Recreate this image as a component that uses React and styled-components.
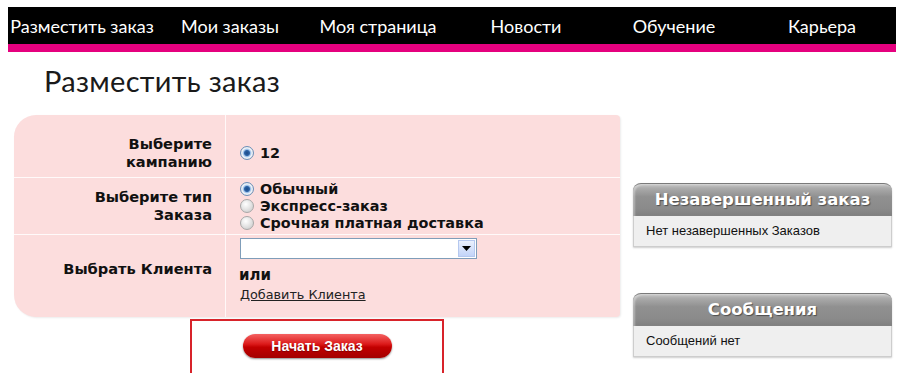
import React from 'react'
import styled, { createGlobalStyle } from 'styled-components'

const navItems = ['Разместить заказ', 'Мои заказы', 'Моя страница', 'Новости', 'Обучение', 'Карьера']

const deliveryTypes = [
  { id: 'normal', title: 'Обычный', checked: true },
  { id: 'express', title: 'Экспресс-заказ' },
  { id: 'paid', title: 'Срочная платная доставка' },
]

const GlobalStyle = createGlobalStyle`
  body {
    margin: 0;
    background: #fff;
    font-family: "DejaVu Sans", sans-serif;
  }
`

function App() {
  return (
    <Page>
      <GlobalStyle />
      <NavBar>
        {navItems.map((item) => (
          <NavItem key={item}>{item}</NavItem>
        ))}
      </NavBar>

      <Title>Разместить заказ</Title>

      <Main>
        <Column>
          <FormPanel>
            <FormRow $height={62}>
              <Label $pad="14px 13px 0 0">Выберите<br />кампанию</Label>
              <Value $pad="14px 0 0 14px">
                <Option>
                  <Radio $checked />
                  12
                </Option>
              </Value>
            </FormRow>

            <FormRow $height={56}>
              <Label>Выберите тип<br />Заказа</Label>
              <Value>
                {deliveryTypes.map((t) => (
                  <Option key={t.id}>
                    <Radio $checked={t.checked} />
                    {t.title}
                  </Option>
                ))}
              </Value>
            </FormRow>

            <FormRow $height={82}>
              <Label $pad="0 13px 14px 0">Выбрать Клиента</Label>
              <Value $top>
                <Select>
                  <SelectArrow>
                    <svg width="9" height="5" viewBox="0 0 9 5">
                      <path d="M0 0h9L4.5 5z" fill="#000" />
                    </svg>
                  </SelectArrow>
                </Select>
                <Or>или</Or>
                <AddLink href="#">Добавить Клиента</AddLink>
              </Value>
            </FormRow>
          </FormPanel>

          <ButtonFrame>
            <StartButton>Начать Заказ</StartButton>
          </ButtonFrame>
        </Column>

        <Sidebar>
          <SideBox>
            <SideHeader>Незавершенный заказ</SideHeader>
            <SideBody>Нет незавершенных Заказов</SideBody>
          </SideBox>
          <SideBox>
            <SideHeader>Сообщения</SideHeader>
            <SideBody>Сообщений нет</SideBody>
          </SideBox>
        </Sidebar>
      </Main>
    </Page>
  )
}

const Page = styled.div`
  padding: 7px 5px 0 8px;
  height: 366px;
  overflow: hidden;
`

const NavBar = styled.nav`
  display: grid;
  grid-template-columns: repeat(6, 1fr);
  align-items: center;
  width: 888px;
  height: 37px;
  background: #000;
  border-bottom: 8px solid #e5007e;
`

const NavItem = styled.div`
  text-align: center;
  color: #fff;
  font-family: Lato, sans-serif;
  font-size: 18px;
  white-space: nowrap;
`

const Title = styled.h1`
  margin: 13px 0 0 36px;
  font-family: Lato, sans-serif;
  font-weight: 400;
  font-size: 29px;
  letter-spacing: 0.3px;
  line-height: 32px;
  color: #1a1a1a;
`

const Main = styled.div`
  display: flex;
  align-items: flex-start;
  margin-top: 18px;
  padding-left: 6px;
`

const Column = styled.div`
  width: 606px;
`

const FormPanel = styled.div`
  background: #fcdddd;
  border-radius: 22px 4px 4px 22px;
  box-shadow: 1px 1px 2px rgba(0, 0, 0, 0.08);
  overflow: hidden;
`

const FormRow = styled.div`
  display: grid;
  grid-template-columns: 212px 1fr;
  height: ${(p) => p.$height}px;
  & + & {
    border-top: 1px solid rgba(255, 255, 255, 0.85);
  }
`

const Label = styled.div`
  display: flex;
  align-items: center;
  justify-content: flex-end;
  text-align: right;
  padding: ${(p) => p.$pad || '0 13px 0 0'};
  border-right: 1px solid rgba(255, 255, 255, 0.8);
  font-weight: bold;
  font-size: 14.6px;
  line-height: 18px;
  color: #111;
`

const Value = styled.div`
  display: flex;
  flex-direction: column;
  justify-content: ${(p) => (p.$top ? 'flex-start' : 'center')};
  padding: ${(p) => p.$pad || (p.$top ? '3px 0 0 13px' : '0 0 0 14px')};
`

const Option = styled.label`
  display: flex;
  align-items: center;
  gap: 6px;
  font-weight: bold;
  font-size: 14.4px;
  line-height: 17px;
  color: #111;
`

const Radio = styled.span`
  width: 12px;
  height: 12px;
  border-radius: 50%;
  border: 1px solid ${(p) => (p.$checked ? '#6c8fb8' : '#a8a8a8')};
  background: ${(p) =>
    p.$checked
      ? 'radial-gradient(circle, #1d4a86 0, #2d63a6 2.5px, #9cc0e8 3.5px, #f2f6fb 5px, #d6d6d6 7px)'
      : 'radial-gradient(circle at 40% 35%, #ffffff 0, #e6e6e6 45%, #c4c4c4 100%)'};
  flex-shrink: 0;
`

const Select = styled.div`
  display: flex;
  justify-content: flex-end;
  align-items: center;
  box-sizing: border-box;
  width: 237px;
  height: 21px;
  margin-left: 1px;
  background: #fff;
  border: 1px solid #7f9db9;
  padding-right: 1px;
`

const SelectArrow = styled.span`
  display: flex;
  align-items: center;
  justify-content: center;
  box-sizing: border-box;
  width: 17px;
  height: 17px;
  border: 1px solid #b5c8ef;
  background: linear-gradient(#eaf0fd, #c3d4f8);
`

const Or = styled.div`
  margin-top: 7px;
  font-weight: bold;
  font-size: 15px;
  line-height: 18px;
  color: #111;
`

const AddLink = styled.a`
  margin: 3px 0 0 1px;
  font-size: 12.8px;
  line-height: 16px;
  color: #222;
  text-decoration: underline;
`

const ButtonFrame = styled.div`
  display: flex;
  justify-content: center;
  align-items: flex-start;
  box-sizing: border-box;
  width: 254px;
  height: 70px;
  margin: 2px 0 0 176px;
  padding-top: 13px;
  border: 2px solid #d8232a;
`

const StartButton = styled.button`
  width: 149px;
  height: 24px;
  border: none;
  border-radius: 12px;
  background: linear-gradient(#f46262 0%, #dc1a1a 42%, #c20000 55%, #a30000 100%);
  box-shadow: 0 1px 2px rgba(0, 0, 0, 0.45);
  color: #fff;
  font-family: "Liberation Sans", Arial, sans-serif;
  font-weight: bold;
  font-size: 14px;
  text-shadow: 0 1px 1px rgba(0, 0, 0, 0.3);
`

const Sidebar = styled.aside`
  display: flex;
  flex-direction: column;
  gap: 46px;
  width: 259px;
  margin: 68px 0 0 13px;
`

const SideBox = styled.section`
  border-radius: 8px 8px 0 0;
  box-shadow: 0 1px 2px rgba(0, 0, 0, 0.2);
`

const SideHeader = styled.h3`
  margin: 0;
  box-sizing: border-box;
  height: 33px;
  border-radius: 8px 8px 0 0;
  border-top: 1px solid #7a7a7a;
  background: linear-gradient(#c4c4c4 0%, #a9a9a9 15%, #909090 40%, #8b8b8b 75%, #7f7f7f 100%);
  box-shadow: inset 2px 1px 2px rgba(255, 255, 255, 0.35);
  text-align: center;
  line-height: 32px;
  font-size: 16.5px;
  font-weight: bold;
  color: #fff;
  text-shadow: 1px 1px 1px rgba(0, 0, 0, 0.45);
`

const SideBody = styled.div`
  height: 30px;
  padding-left: 12px;
  background: #efefef;
  border: 1px solid #cdcdcd;
  border-top: none;
  line-height: 30px;
  font-family: "Liberation Sans", Arial, sans-serif;
  font-size: 13px;
  color: #111;
`

export default App
